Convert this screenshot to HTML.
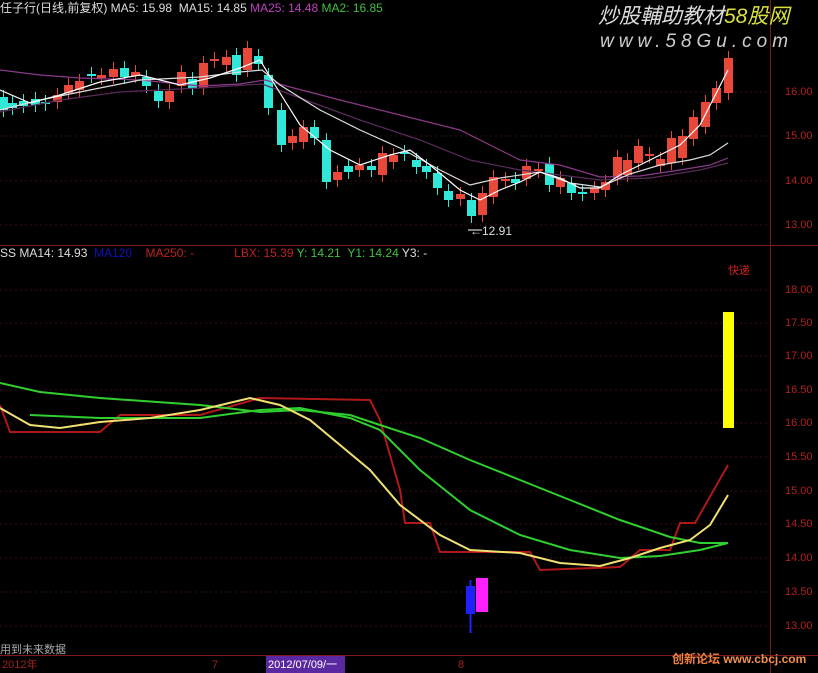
<!DOCTYPE html>
<html><head><meta charset="utf-8"><style>
body{margin:0;background:#000;width:818px;height:673px;overflow:hidden;position:relative;font-family:"Liberation Sans","Noto Sans CJK SC",sans-serif}
.t{position:absolute;font-size:12px;white-space:nowrap;line-height:14px}
</style></head><body>
<svg id="s" width="818" height="673" style="position:absolute;left:0;top:0" xmlns="http://www.w3.org/2000/svg">
<g stroke="#3a0c0c" stroke-dasharray="2,3" stroke-width="1">
<line x1="0" y1="92" x2="770" y2="92"/><line x1="0" y1="136" x2="770" y2="136"/><line x1="0" y1="181" x2="770" y2="181"/><line x1="0" y1="225" x2="770" y2="225"/>
<line x1="0" y1="290" x2="770" y2="290"/><line x1="0" y1="323" x2="770" y2="323"/><line x1="0" y1="356" x2="770" y2="356"/><line x1="0" y1="390" x2="770" y2="390"/><line x1="0" y1="423" x2="770" y2="423"/><line x1="0" y1="457" x2="770" y2="457"/><line x1="0" y1="491" x2="770" y2="491"/><line x1="0" y1="524" x2="770" y2="524"/><line x1="0" y1="558" x2="770" y2="558"/><line x1="0" y1="592" x2="770" y2="592"/><line x1="0" y1="626" x2="770" y2="626"/>
</g>
<g stroke="#7a1a1a" stroke-width="1">
<line x1="0" y1="245.5" x2="818" y2="245.5"/><line x1="0" y1="655.5" x2="818" y2="655.5"/><line x1="770.5" y1="0" x2="770.5" y2="673"/>
</g>
<g id="c"></g>
<g fill="none" stroke-width="1.2">
<polyline stroke="#8a3a8a" points="0,70 40,75 80,78 140,80 200,86 240,84 265,80 290,87 340,100 400,115 460,130 500,150 520,160 560,165 600,177 640,176 680,170 710,165 728,158"/>
<polyline stroke="#5a2a5a" points="0,112 60,100 120,92 200,88 262,84 300,98 360,120 420,140 470,160 520,170 560,175 600,180 650,178 700,170 728,163"/>
<polyline stroke="#ddd" points="0,110 40,100 80,92 140,80 200,77 240,72 262,70 280,85 320,110 360,130 400,148 440,170 470,185 500,178 540,172 570,183 600,187 630,174 660,165 690,160 710,155 728,143"/>
<polyline stroke="#fff" points="0,90 30,103 60,95 100,82 140,75 180,85 210,78 240,68 260,60 275,85 300,125 330,150 360,165 390,155 410,150 430,165 460,190 480,200 500,190 520,182 540,172 560,178 580,188 600,188 620,175 650,160 680,145 700,125 728,70"/>
</g>
<g fill="none" stroke-width="2">
<polyline stroke="#b01818" points="0,405 10,432 100,432 120,415 200,415 260,398 370,400 380,420 400,490 405,523 430,523 440,552 530,552 540,570 620,567 640,550 670,550 680,523 695,523 728,465"/>
<polyline stroke="#2fcf2f" points="0,383 40,392 100,398 200,405 260,412 300,410 350,415 380,425 420,438 470,460 520,480 570,500 620,520 670,537 700,543 728,543"/>
<polyline stroke="#2fcf2f" points="30,415 100,418 200,418 260,410 300,408 350,418 380,430 420,470 470,510 520,535 570,550 620,558 660,556 700,550 728,543"/>
<polyline stroke="#f0e070" points="0,408 30,425 60,428 100,422 150,418 200,410 250,398 280,405 310,420 340,445 370,470 400,505 440,535 470,550 520,553 560,563 600,566 630,558 660,548 690,540 710,525 728,495"/>
</g>
<rect x="723" y="312" width="11" height="116" fill="#ffff00"/>
<line x1="470.5" y1="580" x2="470.5" y2="633" stroke="#2020ff" stroke-width="2"/>
<rect x="466" y="586" width="9" height="28" fill="#2020ff"/>
<rect x="476" y="578" width="12" height="34" fill="#ff20ff"/>
<rect x="266" y="656" width="79" height="17" fill="#5a28a0"/>
<line x1="468" y1="230" x2="482" y2="230" stroke="#fff"/>
</svg>
<div class="t" style="left:0px;top:1px;color:#ddd">任子行(日线,前复权) MA5: 15.98 &nbsp;MA15: 14.85 <span style="color:#c040c0">MA25: 14.48</span> <span style="color:#40c040">MA2: 16.85</span></div>
<div class="t" style="left:0px;top:246px;color:#ddd">SS MA14: 14.93 <span style="color:#1010c0">&nbsp;MA120 &nbsp;</span> <span style="color:#c02020">&nbsp;MA250: -</span><span style="margin-left:40px;color:#c02020">LBX: 15.39</span> <span style="color:#40c040">Y: 14.21 &nbsp;Y1: 14.24</span> <span style="color:#ddd">Y3: -</span></div>
<div class="t" style="left:470px;top:224px;color:#ddd">←12.91</div>
<div class="t" style="left:598px;top:5px;color:#ddd;font-size:21px;line-height:24px;font-style:italic">炒股輔助教材<span style="color:#d8e040">58股网</span></div>
<div class="t" style="left:600px;top:32px;color:#ccc;font-size:19px;line-height:20px;font-style:italic;letter-spacing:5px">www.58Gu.com</div>
<div class="t" style="left:785px;top:85px;color:#b02020;font-size:11px">16.00</div>
<div class="t" style="left:785px;top:129px;color:#b02020;font-size:11px">15.00</div>
<div class="t" style="left:785px;top:174px;color:#b02020;font-size:11px">14.00</div>
<div class="t" style="left:785px;top:218px;color:#b02020;font-size:11px">13.00</div>
<div id="la"></div>
<div class="t" style="left:728px;top:264px;color:#d02020;font-size:11px">快递</div>
<div class="t" style="left:0px;top:643px;color:#aaa;font-size:11px">用到未来数据</div>
<div class="t" style="left:2px;top:658px;color:#a02020;font-size:11px">2012年</div>
<div class="t" style="left:212px;top:658px;color:#a02020;font-size:11px">7</div>
<div class="t" style="left:268px;top:658px;color:#fff;font-size:11px">2012/07/09/一</div>
<div class="t" style="left:458px;top:658px;color:#a02020;font-size:11px">8</div>
<div class="t" style="left:672px;top:652px;color:#f08040;font-size:12px;font-weight:bold">创新论坛 <span style="color:#f09050">www.cbcj.com</span></div>
<script>
var d=[[3,97,110,'c'],[12,103,108,'c'],[23,101,106,'c'],[35,99,105,'c'],[45,102,104,'c'],[57,95,102,'r'],[68,85,93,'r'],[79,81,90,'r'],[91,74,76,'c'],[101,75,78,'r'],[113,69,77,'r'],[124,68,77,'c'],[135,72,76,'r'],[146,77,86,'c'],[158,91,101,'c'],[169,91,102,'r'],[181,72,86,'r'],[192,79,88,'c'],[203,63,88,'r'],[214,59,61,'r'],[226,57,65,'r'],[236,55,75,'c'],[247,48,70,'r'],[258,56,64,'c'],[268,75,108,'c'],[281,110,145,'c'],[292,136,143,'r'],[303,127,142,'r'],[314,127,138,'c'],[326,140,182,'c'],[337,172,180,'r'],[348,166,172,'c'],[359,165,170,'r'],[371,166,170,'c'],[382,153,175,'r'],[393,155,162,'r'],[404,152,154,'c'],[416,160,167,'c'],[426,166,172,'c'],[437,173,188,'c'],[448,191,200,'c'],[460,194,199,'r'],[471,200,216,'c'],[482,193,215,'r'],[493,177,197,'r'],[505,179,181,'r'],[515,179,183,'c'],[526,166,179,'r'],[538,169,171,'r'],[549,164,185,'c'],[560,178,187,'r'],[571,183,193,'c'],[582,192,194,'c'],[594,188,193,'r'],[605,182,190,'r'],[617,157,178,'r'],[627,160,175,'r'],[638,146,163,'r'],[649,154,156,'r'],[660,159,166,'r'],[671,138,163,'r'],[682,136,158,'r'],[693,117,139,'r'],[705,102,127,'r'],[716,88,103,'r'],[728,58,93,'r']];
var h='';d.forEach(function(a){var col=a[3]=='c'?'#30e8d8':'#e8483a';h+='<line x1="'+(a[0]+.5)+'" y1="'+(a[1]-7)+'" x2="'+(a[0]+.5)+'" y2="'+(a[2]+7)+'" stroke="'+col+'"/>';h+='<rect x="'+(a[0]-4)+'" y="'+a[1]+'" width="9" height="'+(a[2]-a[1])+'" fill="'+col+'"/>';});
document.getElementById('c').innerHTML=h;
var l=[['18.00',290],['17.50',323],['17.00',356],['16.50',390],['16.00',423],['15.50',457],['15.00',491],['14.50',524],['14.00',558],['13.50',592],['13.00',626]],s='';
l.forEach(function(a){s+='<div class="t" style="left:785px;top:'+(a[1]-7)+'px;color:#b02020;font-size:11px">'+a[0]+'</div>';});
document.getElementById('la').innerHTML=s;
</script>
</body></html>
